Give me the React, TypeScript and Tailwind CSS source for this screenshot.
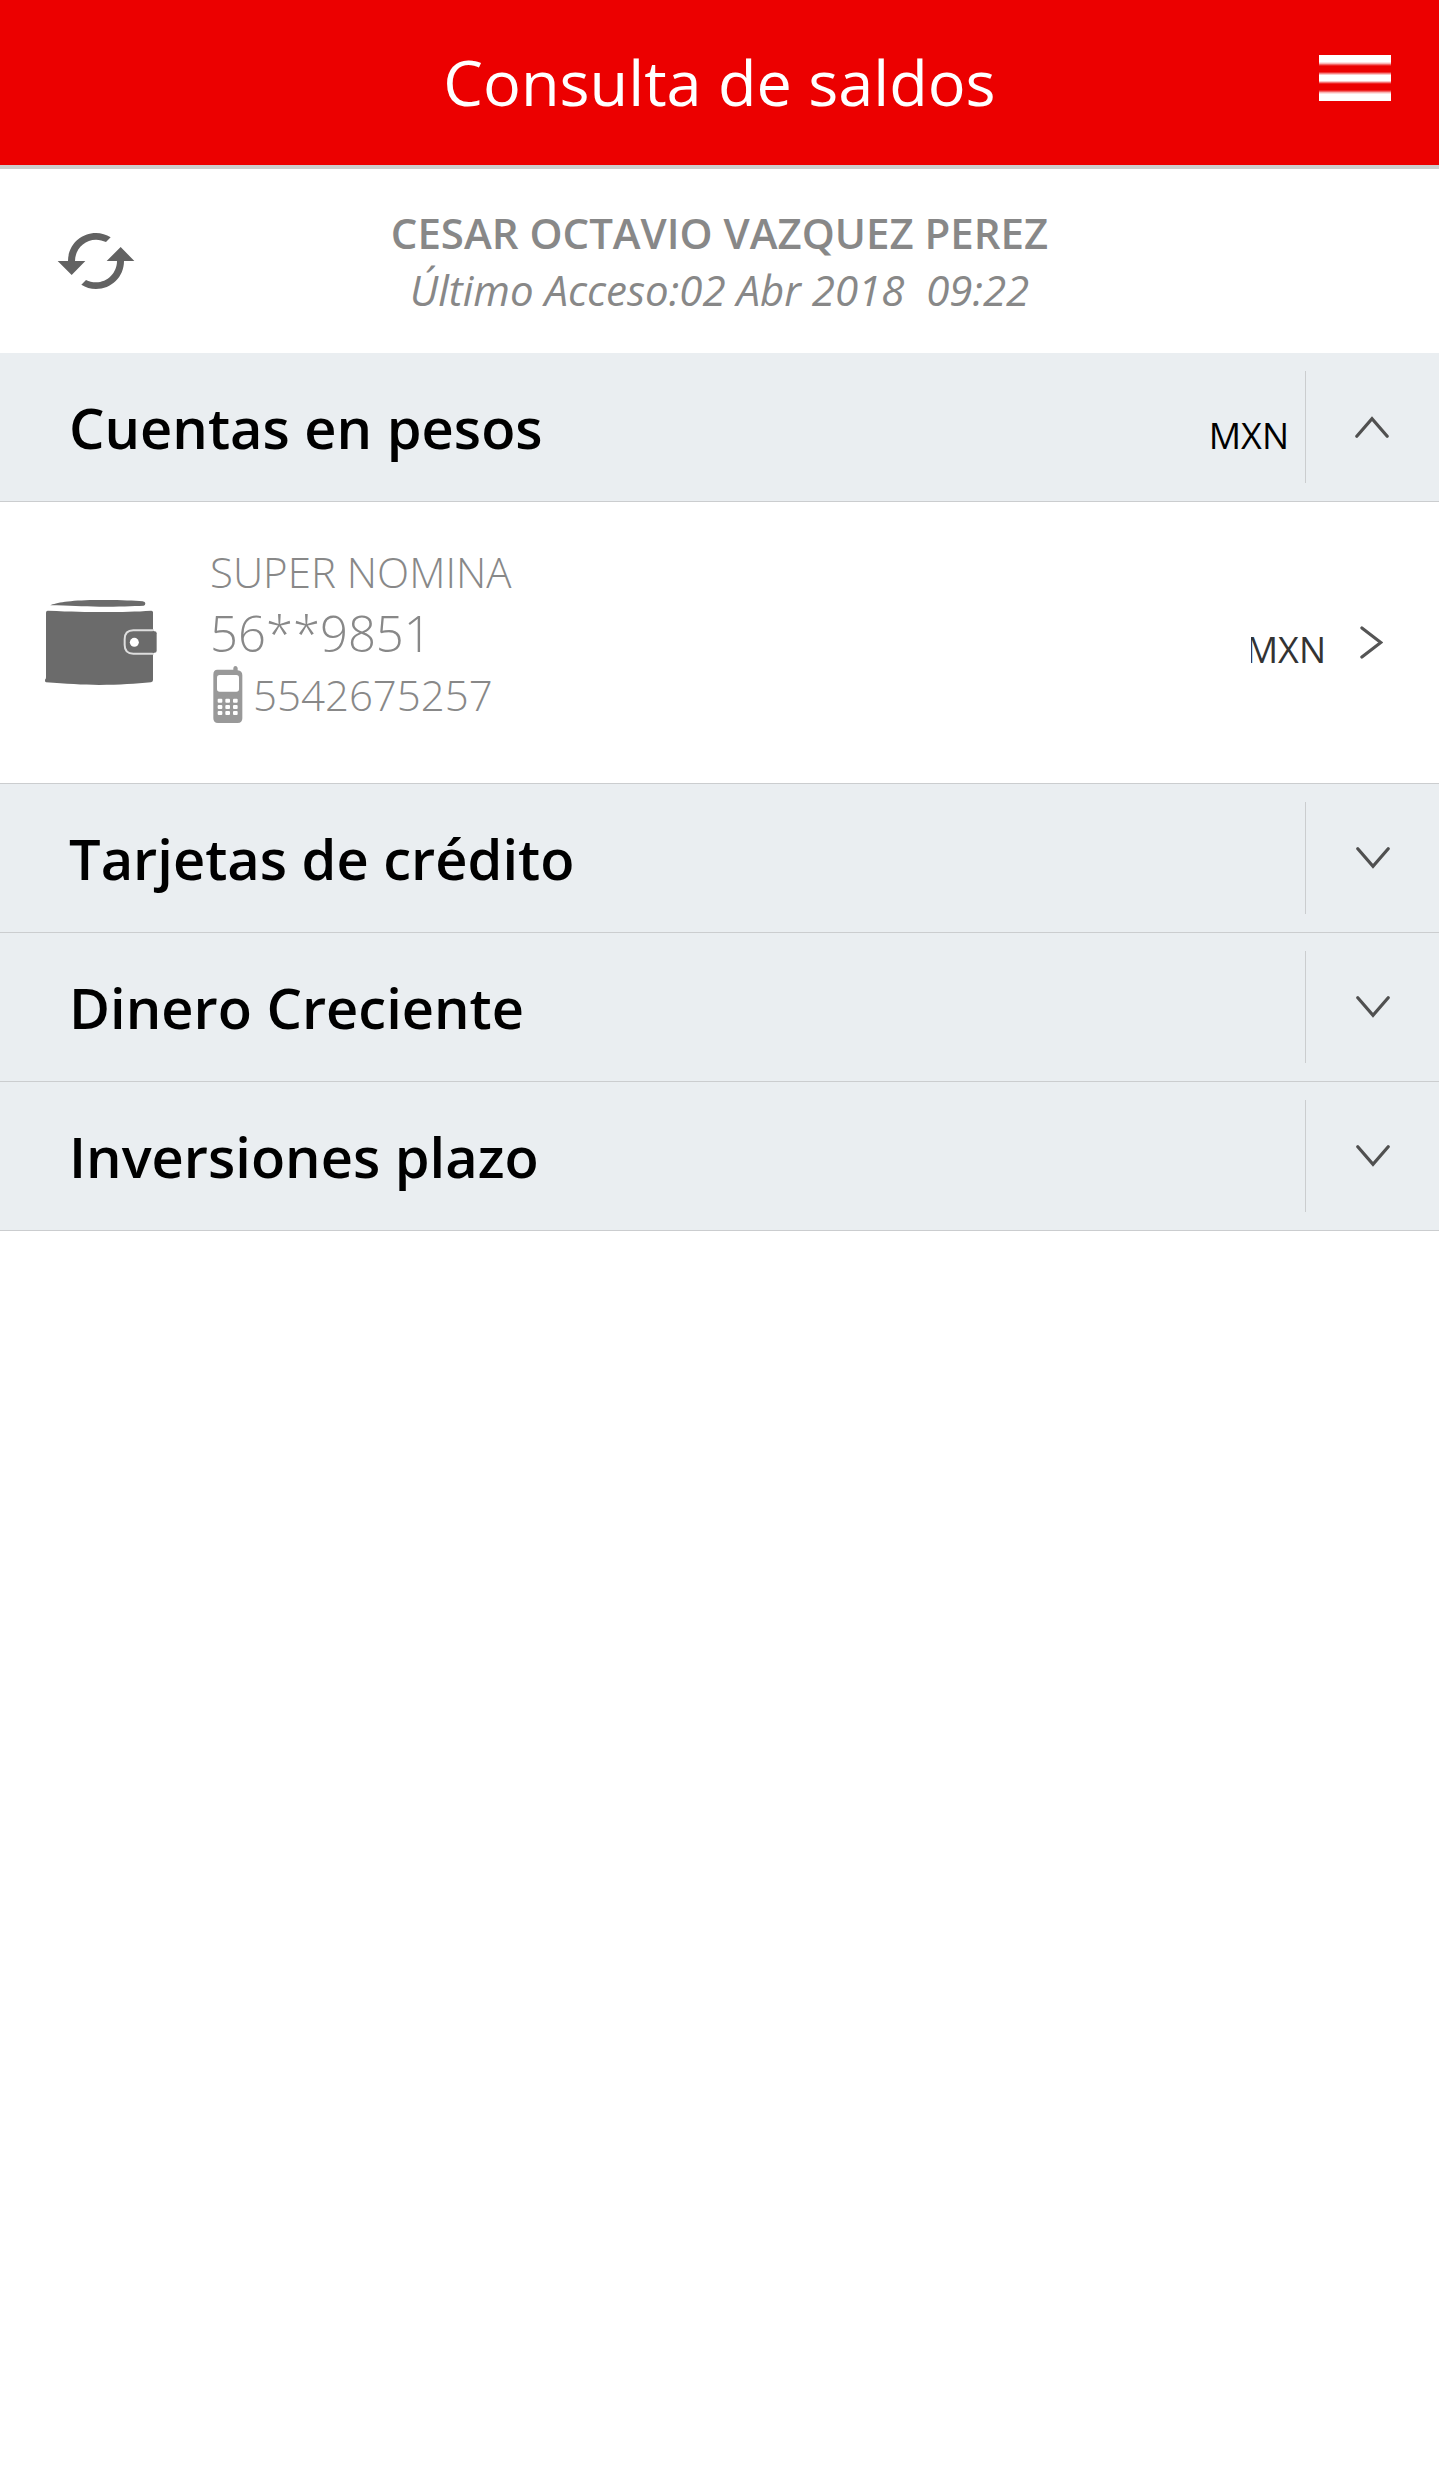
type Section = { title: string; currency?: string; open?: boolean };

const CLOSED_SECTIONS: Section[] = [
  { title: "Tarjetas de crédito" },
  { title: "Dinero Creciente" },
  { title: "Inversiones plazo" },
];

function MenuIcon() {
  return (
    <svg className="h-[46px] w-[72px]" viewBox="0 0 72 46" shapeRendering="crispEdges">
      <g fill="#fff">
        <rect width="72" height="7" />
        <rect y="7" width="72" height="1" opacity=".88" />
        <rect y="8" width="72" height="1" opacity=".7" />
        <rect y="9" width="72" height="1" opacity=".4" />
        <rect y="10" width="72" height="1" opacity=".14" />
        <rect y="17" width="72" height="1" opacity=".2" />
        <rect y="18" width="72" height="1" opacity=".5" />
        <rect y="19" width="72" height="1" opacity=".78" />
        <rect y="20" width="72" height="6" />
        <rect y="26" width="72" height="1" opacity=".78" />
        <rect y="27" width="72" height="1" opacity=".45" />
        <rect y="28" width="72" height="1" opacity=".14" />
        <rect y="35" width="72" height="1" opacity=".14" />
        <rect y="36" width="72" height="1" opacity=".4" />
        <rect y="37" width="72" height="1" opacity=".7" />
        <rect y="38" width="72" height="1" opacity=".88" />
        <rect y="39" width="72" height="7" />
      </g>
    </svg>
  );
}

function RefreshIcon() {
  return (
    <svg className="h-[74px] w-[90px]" viewBox="0 0 270 222">
      <g fill="#626262">
        <path d="M17 111H48C48 63 86 27 132 27C148 27 163 32 176 40L162 54C153 50 143 47 132 47C97 47 69 76 69 111H100L59 153Z" />
        <path d="M247 111H216C216 159 178 195 132 195C116 195 101 190 88 182L102 168C111 172 121 175 132 175C167 175 195 146 195 111H164L206 69Z" />
      </g>
    </svg>
  );
}

function WalletIcon() {
  return (
    <svg className="h-[104px] w-[130px]" viewBox="0 0 390 312">
      <g fill="#6b6b6b">
        <path d="M43 46C60 38 100 31 175 30C240 29 290 31 320 34Q328 35 328 40Q328 47 323 47C290 48 250 50 190 50C140 50 100 47 43 46Z" />
        <path d="M35 62C110 65 150 66 200 66C260 66 300 65 346 62Q351 62 351 67V270Q351 276 345 277C300 281 250 285 190 285C140 285 90 281 30 277Q26 276 27 269Q30 267 30 262V68Q30 62 35 62Z" />
      </g>
      <path d="M366 121H292Q266 121 266 148V165Q266 191 292 191H366" fill="#6b6b6b" stroke="#dedede" strokeWidth="6" />
      <rect x="354" y="116" width="20" height="80" fill="#fff" />
      <path d="M350 124H356Q362 124 362 130V182Q362 188 356 188H350Z" fill="#6b6b6b" />
      <circle cx="295" cy="157" r="13.5" fill="#fff" />
    </svg>
  );
}

function PhoneIcon() {
  return (
    <svg className="h-[57px] w-[30px]" viewBox="0 0 90 171">
      <path d="M13 11H61V6Q62 0 67 0Q73 0 74 6V13Q88 15 88 28V157Q88 171 74 171H15Q1 171 1 157V26Q1 11 13 11Z" fill="#999" />
      <rect x="12" y="27" width="66" height="50" rx="8" fill="#fff" />
      {[98, 117, 135].map((y) =>
        [14, 37, 60].map((x) => <rect key={`${x}-${y}`} x={x} y={y} width="14" height="12" rx="3" fill="#fff" />),
      )}
    </svg>
  );
}

function Chevron({ up = false }: { up?: boolean }) {
  return (
    <svg className="h-[22px] w-[34px]" viewBox="0 0 34 22" fill="none" stroke="#505050" strokeWidth="3.2" strokeLinecap="round">
      <path d={up ? "M1.8 20.2L17 2.6L32.2 20.2" : "M1.8 1.8L17 19.4L32.2 1.8"} />
    </svg>
  );
}

function SectionHeader({ title, currency, open = false }: Section) {
  return (
    <button className="flex h-[149px] w-full items-center border-b border-[#cbcdcf] bg-[#eaeef1] pl-[69px] text-left text-black">
      <span className="flex-1 text-[56px] leading-[76px] font-semibold">{title}</span>
      {currency && <span className="mr-4 pt-[17px] text-4xl leading-[49px]">{currency}</span>}
      <span className={`flex h-28 w-[134px] items-center border-l border-[#cbcdcf] ${open ? "pl-[49px]" : "pl-[50px]"}`}>
        <Chevron up={open} />
      </span>
    </button>
  );
}

export default function App() {
  return (
    <div className="min-h-[2470px] w-full bg-white font-['Open_Sans',sans-serif]">
      <header className="grid h-[169px] grid-cols-[120px_1fr_120px] border-b-4 border-[#cdcdcd] bg-[#ec0000]">
        <h1 className="col-start-2 text-center text-[63px] leading-[163px] text-white">Consulta de saldos</h1>
        <button className="flex items-start pt-[55px]">
          <MenuIcon />
        </button>
      </header>

      <div className="grid h-[184px] grid-cols-[142px_1fr_142px] text-[42px] leading-[57px] text-[#888]">
        <button className="flex items-start pt-[55px] pl-[52px]">
          <RefreshIcon />
        </button>
        <div className="pt-[35px] text-center">
          <p className="font-semibold">CESAR OCTAVIO VAZQUEZ PEREZ</p>
          <p className="whitespace-pre italic">{"Último Acceso:02 Abr 2018  09:22"}</p>
        </div>
      </div>

      <SectionHeader title="Cuentas en pesos" currency="MXN" open />

      <div className="flex h-[282px] items-start border-b border-[#cbcdcf] pl-9 text-[#888]">
        <div className="mt-[88px]">
          <WalletIcon />
        </div>
        <div className="ml-11 flex-1 pt-[41px] text-[42px] leading-[57px] font-light">
          <p>SUPER NOMINA</p>
          <p className="text-[49px] leading-[66px]">56**9851</p>
          <p className="flex items-start gap-[10px] pl-[3px]">
            <PhoneIcon />
            5542675257
          </p>
        </div>
        <div className="mt-[123px] mr-[34px] flex w-[75px] justify-end overflow-hidden text-4xl leading-[49px] text-[#333]">MXN</div>
        <svg className="mt-[124px] mr-14 h-[33px] w-[23px]" viewBox="0 0 23 33" fill="none" stroke="#555" strokeWidth="3.2" strokeLinecap="round">
          <path d="M1.9 2L20.8 16.5L1.9 31" />
        </svg>
      </div>

      {CLOSED_SECTIONS.map((section) => (
        <SectionHeader key={section.title} {...section} />
      ))}
    </div>
  );
}
